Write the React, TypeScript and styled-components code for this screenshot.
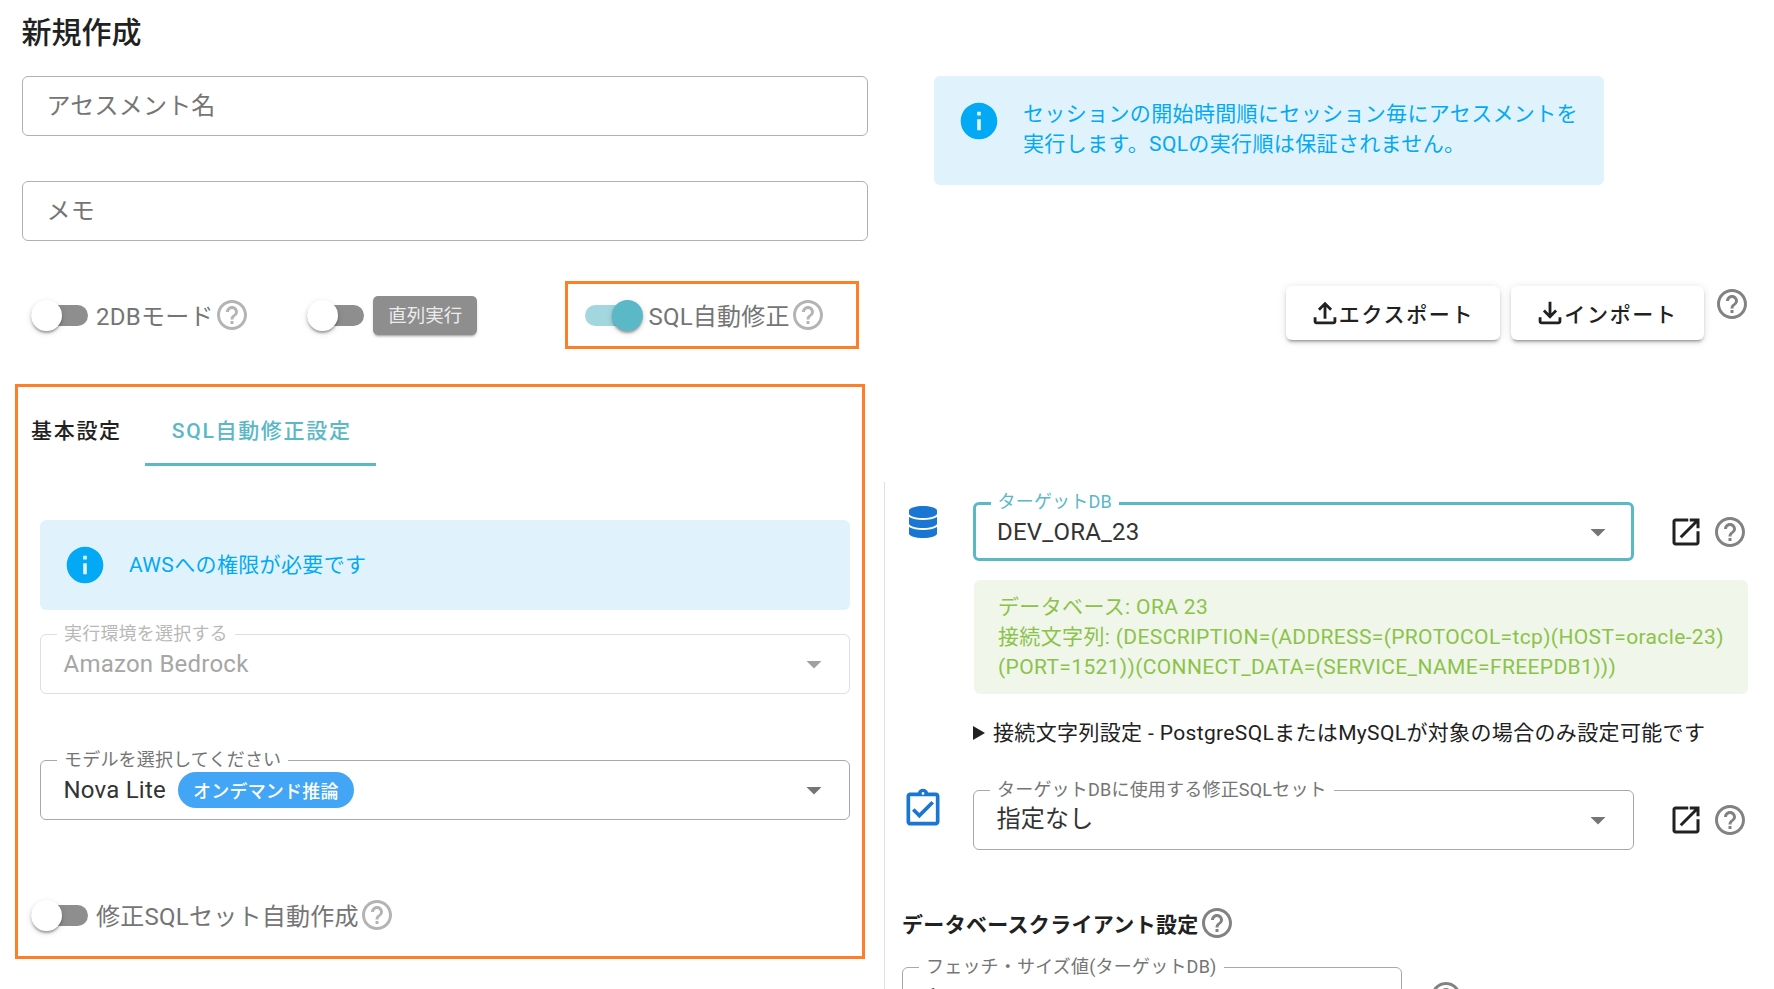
import React, { ReactNode } from "react";
import styled, { createGlobalStyle } from "styled-components";
import { FaDatabase } from "react-icons/fa";
import {
  MdOutlineAssignmentTurnedIn,
  MdOutlineFileDownload,
  MdOutlineFileUpload,
  MdOutlineHelpOutline,
  MdInfo,
  MdArrowDropDown,
} from "react-icons/md";

const TEAL = "#5ab8c7";
const ORANGE = "#ff7f27";
const FONT = `Roboto, "Noto Sans CJK JP", sans-serif`;

const GlobalStyle = createGlobalStyle`
  html, body {
    margin: 0;
    height: 100%;
    overflow: hidden;
    background: #fff;
    font-family: ${FONT};
  }
  * {
    box-sizing: border-box;
  }
`;

const Page = styled.div`
  display: grid;
  grid-template-columns: 884px 890px;
  height: 989px;
  overflow: hidden;
`;

const LeftColumn = styled.div`
  padding-left: 15px;
`;

const Title = styled.h1`
  margin: 14px 0 24px 6.5px;
  font-size: 30px;
  line-height: 38px;
  font-weight: 500;
  color: #212121;
`;

const TextInput = styled.div`
  display: flex;
  align-items: center;
  width: 846px;
  height: 60px;
  margin: 0 0 45px 6.5px;
  padding: 0 0 6px 24px;
  border: 1.5px solid #b0b0b0;
  border-radius: 6px;
  font-size: 24px;
  letter-spacing: 0.225px;
  color: #757575;
`;

const ToggleRow = styled.div`
  display: flex;
  align-items: center;
  height: 68px;
  margin-top: -5px;
  padding-left: 16px;
  gap: 57.6px;
`;

const ToggleGroup = styled.div`
  display: flex;
  align-items: center;
`;

const Track = styled.span<{ $on?: boolean }>`
  position: relative;
  display: block;
  flex: none;
  width: 57px;
  height: 21px;
  border-radius: 11px;
  background: ${({ $on }) => ($on ? "#a2d7df" : "#8e8e8e")};
`;

const Thumb = styled.span<{ $on?: boolean }>`
  position: absolute;
  top: -5px;
  left: ${({ $on }) => ($on ? "27px" : "0")};
  width: 31px;
  height: 31px;
  border-radius: 50%;
  background: ${({ $on }) => ($on ? TEAL : "#fff")};
  box-shadow: 0 3px 2px -1px rgba(0, 0, 0, 0.2), 0 2px 3px rgba(0, 0, 0, 0.14),
    0 2px 6px rgba(0, 0, 0, 0.14);
`;

const ToggleLabel = styled.span`
  margin-left: 8px;
  padding-bottom: 2px;
  font-size: 24px;
  letter-spacing: 0.25px;
  color: #757575;
  white-space: nowrap;
`;

const Annotated = styled.div`
  display: flex;
  align-items: center;
  width: 294px;
  height: 68px;
  margin-left: 30.5px;
  padding-left: 17px;
  border: 3px solid ${ORANGE};

  ${ToggleLabel} {
    margin-left: 6px;
  }
`;

const Chip = styled.span`
  display: flex;
  align-items: center;
  justify-content: center;
  width: 104px;
  height: 39px;
  margin-left: 9px;
  padding-bottom: 2px;
  border-radius: 5px;
  background: #8e8e8e;
  color: #ececec;
  font-size: 18.5px;
  box-shadow: 0 3px 2px -2px rgba(0, 0, 0, 0.25), 0 2px 3px rgba(0, 0, 0, 0.14);
`;

const HelpButton = styled.span<{ $dark?: boolean }>`
  display: flex;
  flex: none;
  font-size: 36px;
  color: ${({ $dark }) => ($dark ? "#828282" : "#b4b4b4")};
`;

const Panel = styled.section`
  width: 850px;
  height: 575px;
  margin-top: 35px;
  padding: 7px 12px 0 22px;
  border: 3px solid ${ORANGE};
`;

const TabRow = styled.div`
  display: flex;
  height: 72px;
  margin-left: -9px;
`;

const Tab = styled.div<{ $active?: boolean }>`
  display: flex;
  align-items: center;
  justify-content: center;
  height: 72px;
  font-size: 21px;
  font-weight: 500;
  letter-spacing: 1.7px;
  padding: ${({ $active }) => ($active ? "0 24px 0 27px" : "0 23px 0 0")};
  color: ${({ $active }) => ($active ? TEAL : "#212121")};
  border-bottom: 3px solid ${({ $active }) => ($active ? TEAL : "transparent")};
`;

const InfoBox = styled.div<{ $wide?: boolean }>`
  display: flex;
  align-items: ${({ $wide }) => ($wide ? "flex-start" : "center")};
  gap: 22px;
  height: ${({ $wide }) => ($wide ? "109px" : "90px")};
  padding: ${({ $wide }) => ($wide ? "23px 24px 0 24px" : "0 24px 0 24px")};
  border-radius: 6px;
  background: #e0f3fc;
  color: #03a9f4;
  font-size: 21px;
  line-height: 30px;
  letter-spacing: 0.36px;
`;

const InfoGlyph = styled.span`
  display: flex;
  flex: none;
  margin-left: -1px;
  font-size: 44px;
  color: #03a9f4;
`;

const Stack = styled.div`
  display: flex;
  flex-direction: column;
  gap: 24px;
  margin-top: 54px;
`;

const Field = styled.div<{ $focused?: boolean; $disabled?: boolean; $gap?: number; $lift?: number }>`
  position: relative;
  display: flex;
  align-items: center;
  height: ${({ $focused }) => ($focused ? "59px" : "60px")};
  padding: 0 0 ${({ $lift }) => $lift ?? 0}px ${({ $focused }) => ($focused ? "21px" : "22.5px")};
  margin-top: ${({ $gap }) => $gap ?? 0}px;
  border: ${({ $focused }) => ($focused ? `3px solid ${TEAL}` : "1.5px solid")};
  border-color: ${({ $focused, $disabled }) =>
    $focused ? TEAL : $disabled ? "#dedede" : "#a8a8a8"};
  border-radius: 6px;
  font-size: 24px;
  letter-spacing: 0.225px;
  color: ${({ $disabled }) => ($disabled ? "#a6a6a6" : "#333")};
`;

const FieldLabel = styled.span<{ $focused?: boolean; $disabled?: boolean }>`
  position: absolute;
  top: ${({ $focused }) => ($focused ? "-14px" : "-12px")};
  left: ${({ $focused }) => ($focused ? "14.5px" : "16px")};
  padding: 0 7px;
  background: #fff;
  font-size: 18px;
  line-height: 21px;
  letter-spacing: 0.2px;
  white-space: nowrap;
  color: ${({ $focused, $disabled }) =>
    $focused ? TEAL : $disabled ? "#b8b8b8" : "#757575"};
`;

const FieldArrow = styled.span<{ $disabled?: boolean; $focused?: boolean }>`
  position: absolute;
  right: ${({ $focused }) => ($focused ? "15.5px" : "17px")};
  top: 50%;
  display: flex;
  transform: translateY(-50%);
  font-size: 36px;
  color: ${({ $disabled }) => ($disabled ? "#a0a0a0" : "#757575")};
`;

const Badge = styled.span`
  display: inline-flex;
  align-items: center;
  height: 36px;
  margin-left: 12px;
  padding: 0 15px;
  border-radius: 18px;
  background: #42a5f5;
  color: #fff;
  font-size: 18px;
  font-weight: 500;
`;

const BottomToggle = styled(ToggleGroup)`
  margin: 75px 0 0 -9px;
  height: 40px;
`;

const RightColumn = styled.div`
  display: flex;
  flex-direction: column;
`;

const TopArea = styled.div`
  height: 482px;
  padding: 76px 24.3px 0 50px;
`;

const TopAlert = styled.div`
  width: 670px;
`;

const ButtonRow = styled.div`
  display: flex;
  justify-content: flex-end;
  gap: 11px;
  margin-top: 101px;
`;

const ActionButton = styled.button<{ $width: number }>`
  display: flex;
  align-items: center;
  justify-content: center;
  width: ${({ $width }) => $width}px;
  height: 54px;
  padding: 0;
  border: 0;
  border-radius: 6px;
  background: #fff;
  color: #212121;
  font-family: ${FONT};
  font-size: 21px;
  font-weight: 500;
  letter-spacing: 1.7px;
  box-shadow: 0 4px 2px -3px rgba(0, 0, 0, 0.25), 0 3px 3px rgba(0, 0, 0, 0.14),
    0 1px 8px rgba(0, 0, 0, 0.12);

  svg {
    font-size: 34px;
    margin: 0 -3px 0 -4px;
  }
`;

const CornerHelp = styled(HelpButton)`
  margin-left: -1.3px;
`;

const LowerArea = styled.div`
  flex: 1;
  padding-top: 20px;
  border-left: 1px solid #e0e0e0;
`;

const SelectRow = styled.div<{ $gap?: number }>`
  display: grid;
  grid-template-columns: 88px 661px auto;
  align-items: center;
  margin-top: ${({ $gap }) => $gap ?? 0}px;
`;

const LeadIcon = styled.span<{ $size: number; $shift: number; $top: number }>`
  display: flex;
  align-self: start;
  margin: ${({ $top }) => $top}px 0 0 ${({ $shift }) => $shift}px;
  font-size: ${({ $size }) => $size}px;
  color: #1976d2;
`;

const RowActions = styled.div`
  display: flex;
  align-items: center;
  gap: 8px;
  margin-left: 34px;
`;

const OpenIcon = styled.svg`
  width: 36px;
  height: 36px;
  fill: #212121;
`;

const SuccessBox = styled.div`
  width: 774px;
  margin: 19px 0 0 89px;
  padding: 12px 24px;
  border-radius: 6px;
  background: #f0f6ea;
  color: #8bc34a;
  font-size: 21px;
  line-height: 30px;
  letter-spacing: 0.36px;
`;

const Disclosure = styled.details`
  margin: 24px 0 0 88px;
  font-size: 21px;
  line-height: 30px;
  letter-spacing: 0.35px;
  color: #212121;

  summary {
    display: flex;
    align-items: center;
    gap: 8px;
    list-style: none;
  }

  summary::before {
    content: "";
    width: 0;
    height: 0;
    border-style: solid;
    border-width: 7px 0 7px 12px;
    border-color: transparent transparent transparent #212121;
  }
`;

const SubHeading = styled.h2`
  display: flex;
  align-items: center;
  height: 36px;
  margin: 55px 0 26px 17px;
  font-size: 21px;
  font-weight: 700;
  letter-spacing: 0.32px;
  color: #212121;
`;

const ShortField = styled(Field)`
  width: 500px;
`;

const FetchRow = styled.div`
  display: flex;
  align-items: flex-start;
  margin-left: 17px;
`;

const FetchHelp = styled(HelpButton)`
  margin: 12px 0 0 26px;
`;

const Help = ({ dark }: { dark?: boolean }) => (
  <HelpButton $dark={dark}>
    <MdOutlineHelpOutline />
  </HelpButton>
);

const Toggle = ({ on, children }: { on?: boolean; children?: ReactNode }) => (
  <>
    <Track $on={on}>
      <Thumb $on={on} />
    </Track>
    {children}
  </>
);

const Select = ({
  label,
  focused,
  disabled,
  lift,
  children,
}: {
  label: string;
  focused?: boolean;
  disabled?: boolean;
  lift?: number;
  children: ReactNode;
}) => (
  <Field $focused={focused} $disabled={disabled} $lift={lift}>
    <FieldLabel $focused={focused} $disabled={disabled}>
      {label}
    </FieldLabel>
    {children}
    <FieldArrow $disabled={disabled} $focused={focused}>
      <MdArrowDropDown />
    </FieldArrow>
  </Field>
);

const Actions = () => (
  <RowActions>
    <OpenIcon viewBox="0 0 24 24">
      <path d="M19 19H5V5h8.5V3H5c-1.1 0-2 .9-2 2v14c0 1.1.9 2 2 2h14c1.1 0 2-.9 2-2v-7.5h-2V19z" />
      <path d="M14.5 3v2h3.1L7.8 14.8l1.4 1.4L19 6.4v3.1h2V3h-6.5z" />
    </OpenIcon>
    <Help dark />
  </RowActions>
);

export default function App() {
  return (
    <Page>
      <GlobalStyle />
      <LeftColumn>
        <Title>新規作成</Title>
        <TextInput>アセスメント名</TextInput>
        <TextInput>メモ</TextInput>
        <ToggleRow>
          <ToggleGroup>
            <Toggle>
              <ToggleLabel>2DBモード</ToggleLabel>
            </Toggle>
            <Help />
          </ToggleGroup>
          <ToggleGroup>
            <Toggle />
            <Chip>直列実行</Chip>
          </ToggleGroup>
          <Annotated>
            <Toggle on>
              <ToggleLabel>SQL自動修正</ToggleLabel>
            </Toggle>
            <Help />
          </Annotated>
        </ToggleRow>
        <Panel>
          <TabRow>
            <Tab>基本設定</Tab>
            <Tab $active>SQL自動修正設定</Tab>
          </TabRow>
          <Stack>
            <InfoBox>
              <InfoGlyph>
                <MdInfo />
              </InfoGlyph>
              AWSへの権限が必要です
            </InfoBox>
            <Select label="実行環境を選択する" disabled>
              Amazon Bedrock
            </Select>
          </Stack>
          <Field $gap={66}>
            <FieldLabel>モデルを選択してください</FieldLabel>
            Nova Lite
            <Badge>オンデマンド推論</Badge>
            <FieldArrow>
              <MdArrowDropDown />
            </FieldArrow>
          </Field>
          <BottomToggle>
            <Toggle>
              <ToggleLabel>修正SQLセット自動作成</ToggleLabel>
            </Toggle>
            <Help />
          </BottomToggle>
        </Panel>
      </LeftColumn>
      <RightColumn>
        <TopArea>
          <TopAlert>
            <InfoBox $wide>
              <InfoGlyph>
                <MdInfo />
              </InfoGlyph>
              <span>
                セッションの開始時間順にセッション毎にアセスメントを
                <br />
                実行します。SQLの実行順は保証されません。
              </span>
            </InfoBox>
          </TopAlert>
          <ButtonRow>
            <ActionButton $width={214}>
              <MdOutlineFileUpload />
              エクスポート
            </ActionButton>
            <ActionButton $width={193}>
              <MdOutlineFileDownload />
              インポート
            </ActionButton>
            <CornerHelp $dark>
              <MdOutlineHelpOutline />
            </CornerHelp>
          </ButtonRow>
        </TopArea>
        <LowerArea>
          <SelectRow>
            <LeadIcon $size={32} $shift={22} $top={4}>
              <FaDatabase />
            </LeadIcon>
            <Select label="ターゲットDB" focused>
              DEV_ORA_23
            </Select>
            <Actions />
          </SelectRow>
          <SuccessBox>
            データベース: ORA 23
            <br />
            接続文字列: (DESCRIPTION=(ADDRESS=(PROTOCOL=tcp)(HOST=oracle-23)
            <br />
            (PORT=1521))(CONNECT_DATA=(SERVICE_NAME=FREEPDB1)))
          </SuccessBox>
          <Disclosure>
            <summary>接続文字列設定 - PostgreSQLまたはMySQLが対象の場合のみ設定可能です</summary>
          </Disclosure>
          <SelectRow $gap={42}>
            <LeadIcon $size={44} $shift={16} $top={-3}>
              <MdOutlineAssignmentTurnedIn />
            </LeadIcon>
            <Select label="ターゲットDBに使用する修正SQLセット" lift={8}>
              指定なし
            </Select>
            <Actions />
          </SelectRow>
          <SubHeading>
            データベースクライアント設定
            <Help dark />
          </SubHeading>
          <FetchRow>
            <ShortField>
              <FieldLabel>フェッチ・サイズ値(ターゲットDB)</FieldLabel>1
            </ShortField>
            <FetchHelp $dark>
              <MdOutlineHelpOutline />
            </FetchHelp>
          </FetchRow>
        </LowerArea>
      </RightColumn>
    </Page>
  );
}
